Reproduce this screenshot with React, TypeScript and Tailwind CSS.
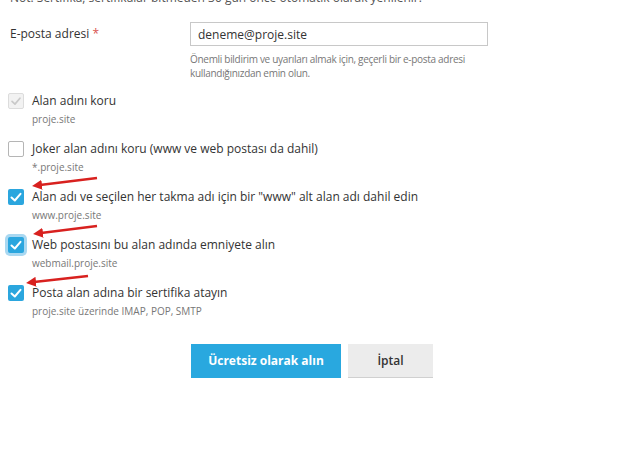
import { ReactNode } from "react";

type CheckState = "checked" | "unchecked" | "disabled";

const Tick = ({ color }: { color: string }) => (
  <svg viewBox="0 0 16 16" className="w-[16px] h-[16px]">
    <polyline points="3.5,8.5 6.8,11.5 12.5,4.8" fill="none" stroke={color} strokeWidth="2" strokeLinecap="round" strokeLinejoin="round" />
  </svg>
);

const Box = ({ state, focused }: { state: CheckState; focused?: boolean }) => {
  if (state === "disabled") {
    return (
      <span className="w-[16px] h-[16px] rounded-[2px] border border-[#dcdcdc] bg-[#f2f2f2] flex items-center justify-center shrink-0">
        <Tick color="#c9c9c9" />
      </span>
    );
  }
  if (state === "unchecked") {
    return <span className="w-[16px] h-[16px] rounded-[2px] border border-[#b5b5b5] bg-white shrink-0" />;
  }
  return (
    <span
      className={
        focused
          ? "w-[16px] h-[16px] rounded-[2px] bg-[#2ba6de] flex items-center justify-center shrink-0 ring-[3px] ring-[#a9d8f1]"
          : "w-[16px] h-[16px] rounded-[2px] bg-[#2ba6de] flex items-center justify-center shrink-0"
      }
    >
      <Tick color="#ffffff" />
    </span>
  );
};

const Option = ({ state, focused, label, hint }: { state: CheckState; focused?: boolean; label: ReactNode; hint: string }) => (
  <div className="flex flex-col">
    <div className="flex items-center gap-[8px] -ml-[2px] h-[18px]">
      <Box state={state} focused={focused} />
      <span className="leading-[18px] text-[#333]">{label}</span>
    </div>
    <div className="pl-[22px] mt-[1px] text-[10px] leading-[16px] text-[#777]">{hint}</div>
  </div>
);

// red hand-drawn pointers next to the options
const Arrows = () => (
  <svg className="absolute inset-0 pointer-events-none" width="640" height="450">
    <defs>
      <marker id="head" viewBox="0 0 10 10" refX="2" refY="5" markerWidth="4" markerHeight="4" orient="auto-start-reverse">
        <path d="M0,0 L10,5 L0,10 z" fill="#d8211f" />
      </marker>
    </defs>
    <line x1="97" y1="178" x2="40" y2="185" stroke="#d8211f" strokeWidth="2.5" markerEnd="url(#head)" />
    <line x1="97" y1="226" x2="41" y2="233" stroke="#d8211f" strokeWidth="2.5" markerEnd="url(#head)" />
    <line x1="88" y1="276" x2="34" y2="282" stroke="#d8211f" strokeWidth="2.5" markerEnd="url(#head)" />
  </svg>
);

export default function App() {
  return (
    <div className="relative w-[640px] h-[450px] overflow-hidden bg-white font-['Open_Sans',sans-serif] text-[12px] text-[#333]">
      <div className="pl-[10px]">
        <p className="-mt-[11px] leading-[18px] text-[#555]">
          Not: Sertifika, sertifikalar bitmeden 30 gün önce otomatik olarak yenilenir.
        </p>

        <div className="flex mt-[15px]">
          <label className="w-[180px] pt-[2px] leading-[20px]">
            E-posta adresi <span className="text-[#d9534f]">*</span>
          </label>
          <div className="flex flex-col">
            <input
              className="w-[298px] h-[24px] border border-[#c8c8c8] px-[7px] text-[12px] text-[#333] outline-none"
              defaultValue="deneme@proje.site"
            />
            <p className="mt-[6px] w-[298px] text-[10px] tracking-[-0.3px] leading-[14px] text-[#777]">
              Önemli bildirim ve uyarıları almak için, geçerli bir e-posta adresi kullandığınızdan emin olun.
            </p>
          </div>
        </div>

        <div className="flex flex-col gap-[13px] mt-[12px]">
          <Option state="disabled" label="Alan adını koru" hint="proje.site" />
          <Option state="unchecked" label="Joker alan adını koru (www ve web postası da dahil)" hint="*.proje.site" />
          <Option state="checked" label={'Alan adı ve seçilen her takma adı için bir "www" alt alan adı dahil edin'} hint="www.proje.site" />
          <Option state="checked" focused label="Web postasını bu alan adında emniyete alın" hint="webmail.proje.site" />
          <Option state="checked" label="Posta alan adına bir sertifika atayın" hint="proje.site üzerinde IMAP, POP, SMTP" />
        </div>

        <div className="flex gap-[7px] ml-[181px] mt-[25px]">
          <button className="w-[150px] h-[34px] bg-[#29a8df] text-white font-bold text-[12px]">Ücretsiz olarak alın</button>
          <button className="w-[85px] h-[34px] bg-[#ececec] border-b border-[#d0d0d0] text-[#333] font-semibold text-[12px]">İptal</button>
        </div>
      </div>
      <Arrows />
    </div>
  );
}
